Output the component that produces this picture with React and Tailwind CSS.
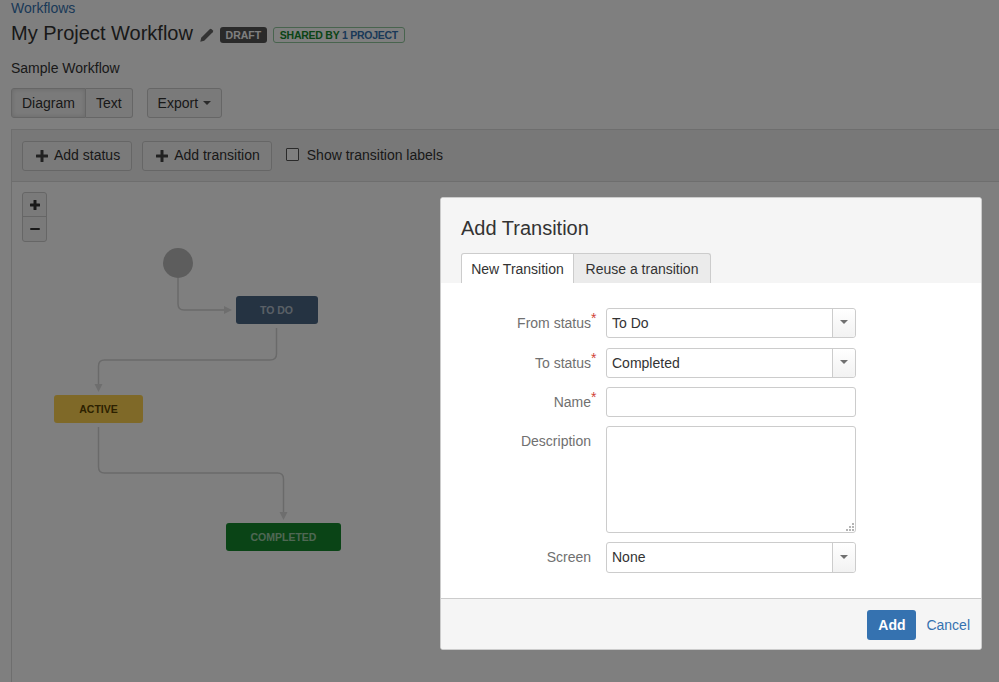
import React from "react";

function Btn({ children, className = "" }) {
  return (
    <button className={"h-[30px] px-[10px] border border-[#cccccc] rounded-[3px] bg-[#f5f5f5] text-[#333] text-[14px] flex items-center " + className}>
      {children}
    </button>
  );
}

function Caret({ className = "border-x-[4px] border-t-[4px] border-t-[#555]" }) {
  return <span className={"w-0 h-0 border-x-transparent inline-block " + className} />;
}

function PlusIcon({ size = 12, bar = 3, className = "" }) {
  const o = (size - bar) / 2;
  return (
    <svg width={size} height={size} viewBox={`0 0 ${size} ${size}`} fill="currentColor" className={className}>
      <rect x="0" y={o} width={size} height={bar} rx="0.5" />
      <rect x={o} y="0" width={bar} height={size} rx="0.5" />
    </svg>
  );
}

function Row({ label, required, children, className = "" }) {
  return (
    <div className={"flex " + className}>
      <div className="w-[145px] pr-[15px] text-right text-[14px] text-[#707070] leading-[20px] pt-[5px]">
        {label}
        {required && <span className="text-[#d04437] relative -top-[5px] text-[14px] leading-none inline-block w-0 text-left">*</span>}
      </div>
      {children}
    </div>
  );
}

function SelectBox({ value, h = "h-[30px]" }) {
  return (
    <div className={"w-[250px] " + h + " border border-[#cccccc] rounded-[3px] bg-white flex items-stretch text-[14px] text-[#333]"}>
      <div className="flex-1 pl-[5px] leading-[28px]">{value}</div>
      <div className="w-[23px] border-l border-[#cccccc] bg-gradient-to-b from-white to-[#f2f2f2] rounded-r-[3px] flex items-center justify-center">
        <Caret className="-mt-[2px] border-x-[4px] border-t-[4px] border-t-[#707070]" />
      </div>
    </div>
  );
}

function Node({ className, children }) {
  return (
    <div className={"absolute h-[28px] pt-[1px] rounded-[3px] flex items-center justify-center text-[10.500px] font-bold " + className}>
      {children}
    </div>
  );
}

export default function App() {
  return (
    <div className="relative h-[682px] w-[999px] overflow-hidden bg-white text-[#333] text-[14px] font-['Liberation_Sans',Arial,sans-serif]">
      <div className="pl-[11px] h-full flex flex-col">
        <a className="text-[#3572b0] leading-[16px] h-[16px] block">Workflows</a>
        <div className="flex items-center mt-[5px] h-[24px]">
          <h1 className="text-[20px] leading-[24px] font-normal text-[#333]">My Project Workflow</h1>
          <svg className="ml-[7px] mt-[3px]" width="14" height="14" viewBox="0 0 14 14" fill="#666666">
            <path d="M0.300 13.700L1.200 9.800L9.700 1.300Q10.700 0.300 11.700 1.300L12.700 2.300Q13.700 3.300 12.700 4.300L4.200 12.800Z" />
          </svg>
          <span className="ml-[6px] mt-[3px] w-[47px] h-[16px] text-center rounded-[3px] bg-[#555] text-white text-[10.500px] font-bold leading-[16px]">DRAFT</span>
          <span className="ml-[6px] mt-[3px] w-[132px] h-[16px] text-center rounded-[3px] border border-[#91c89c] text-[10.500px] font-bold leading-[14px] tracking-[-0.25px] text-[#14892c]">
            SHARED BY <span className="text-[#3572b0]">1 PROJECT</span>
          </span>
        </div>
        <p className="mt-[13px] h-[20px] leading-[20px] text-[14px]">Sample Workflow</p>
        <div className="flex mt-[10px]">
          <Btn className="rounded-r-none bg-[#e9e9e9] shadow-[inset_0_0_5px_rgba(0,0,0,0.15)]">Diagram</Btn>
          <Btn className="rounded-l-none border-l-0">Text</Btn>
          <Btn className="ml-[14px]">Export<span className="ml-[5px] flex"><Caret /></span></Btn>
        </div>
        <div className="mt-[11px] flex-1 border-l border-[#dddddd] border-t flex flex-col">
          <div className="h-[52px] bg-[#f0f0f0] border-b border-[#dddddd] flex items-center pl-[10px]">
            <Btn className="pl-[13px] pr-[11px]"><PlusIcon className="mr-[6px] text-[#444]" />Add status</Btn>
            <Btn className="ml-[10px] pl-[13px] pr-[11px]"><PlusIcon className="mr-[6px] text-[#444]" />Add transition</Btn>
            <label className="ml-[14px] flex items-center">
              <span className="w-[13px] h-[13px] -mt-[2px] border border-[#555] bg-white rounded-[1px]" />
              <span className="ml-[8px]">Show transition labels</span>
            </label>
          </div>
          <div className="relative flex-1 bg-white">
            <div className="absolute left-[10px] top-[10px] w-[25px] h-[50px] border border-[#cccccc] rounded-[3px] bg-[#f5f5f5] flex flex-col">
              <div className="h-[24px] border-b border-[#cccccc] flex items-center justify-center"><PlusIcon size={10} bar={3} className="text-[#333]" /></div>
              <div className="flex-1 flex items-center justify-center"><span className="w-[10px] h-[2.500px] bg-[#333] rounded-[1px]" /></div>
            </div>
            <svg className="absolute left-0 top-0" width="987" height="500" viewBox="12 182 987 500" fill="none">
              <circle cx="178" cy="263" r="15" fill="#bbbbbb" />
              <path d="M178 278V304Q178 310 184 310H226" stroke="#d4d4d4" strokeWidth="1.5" />
              <path d="M232 310L224 306V314Z" fill="#dddddd" />
              <path d="M276.500 328V354Q276.500 360 270 360H104.500Q98.500 360 98.500 366V386" stroke="#d4d4d4" strokeWidth="1.5" />
              <path d="M98.500 392L94.500 384H102.500Z" fill="#dddddd" />
              <path d="M98.500 427V467Q98.500 473 104.500 473H277.500Q283.500 473 283.500 479V514" stroke="#d4d4d4" strokeWidth="1.5" />
              <path d="M283.500 520L279.500 512H287.500Z" fill="#dddddd" />
            </svg>
            <Node className="left-[223.500px] top-[114px] w-[82px] bg-[#4a6785] text-white/60">TO DO</Node>
            <Node className="left-[42px] top-[213px] w-[89px] bg-[#ffd351] text-[#594300]">ACTIVE</Node>
            <Node className="left-[214px] top-[341px] w-[115px] bg-[#14892c] text-white/60">COMPLETED</Node>
          </div>
        </div>
      </div>

      <div className="absolute inset-0 bg-black/50" />

      <div className="absolute left-[440px] top-[197px] w-[542px] h-[453px] bg-white rounded-[3px] border border-[#cccccc] flex flex-col overflow-hidden">
        <div className="h-[85px] bg-[#f5f5f5] relative flex flex-col">
          <h2 className="pl-[20px] pt-[17px] text-[20px] leading-[26px] font-normal text-[#333]">Add Transition</h2>
          <div className="flex pl-[20px] mt-[12px]">
            <div className="w-[113px] text-center h-[30px] bg-white border border-[#cccccc] border-b-0 rounded-tl-[3px] leading-[30px] text-[14px] text-[#333]">New Transition</div>
            <div className="w-[137px] text-center h-[30px] bg-[#ebebeb] border border-[#cccccc] border-l-0 border-b-0 rounded-tr-[3px] leading-[30px] text-[14px] text-[#333]">Reuse a transition</div>
          </div>
        </div>
        <div className="flex-1 pl-[20px] pt-[25px]">
          <Row label="From status" required><SelectBox value="To Do" /></Row>
          <Row label="To status" required className="mt-[10px]"><SelectBox value="Completed" /></Row>
          <Row label="Name" required className="mt-[9px]">
            <div className="w-[250px] h-[30px] border border-[#cccccc] rounded-[3px] bg-white" />
          </Row>
          <Row label="Description" className="mt-[9px]">
            <div className="relative w-[250px] h-[107px] border border-[#cccccc] rounded-[3px] bg-white">
              <svg className="absolute right-[1px] bottom-[1px]" width="9" height="9" viewBox="0 0 9 9" fill="#b5b5b5">
                <rect x="7" y="1" width="2" height="2" /><rect x="4" y="4" width="2" height="2" /><rect x="7" y="4" width="2" height="2" />
                <rect x="1" y="7" width="2" height="2" /><rect x="4" y="7" width="2" height="2" /><rect x="7" y="7" width="2" height="2" />
              </svg>
            </div>
          </Row>
          <Row label="Screen" className="mt-[9px]"><SelectBox value="None" h="h-[31px]" /></Row>
        </div>
        <div className="h-[51px] bg-[#f5f5f5] border-t border-[#cccccc] flex items-start justify-end pt-[11px] pr-[11px]">
          <button className="w-[49px] h-[30px] bg-[#3572b0] rounded-[3px] text-white font-bold text-[14px]">Add</button>
          <a className="ml-[10px] mt-[5px] text-[#3572b0] text-[14px] leading-[20px]">Cancel</a>
        </div>
      </div>
    </div>
  );
}
